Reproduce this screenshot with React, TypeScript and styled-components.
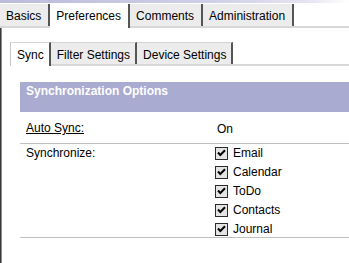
import React from "react";
import styled, { createGlobalStyle } from "styled-components";

const Global = createGlobalStyle`
  html, body { margin: 0; padding: 0; background: #ffffff; }
  body { font-family: "Liberation Sans", Arial, sans-serif; font-size: 12px; color: #000; }
  * { box-sizing: border-box; }
`;

const Page = styled.div`
  width: 349px;
  height: 263px;
  overflow: hidden;
  display: flex;
  flex-direction: column;
`;

const TopStrip = styled.div`
  height: 3px;
  background: linear-gradient(90deg, #bcbcda 0%, #cfcfe6 60%, #e4e4f2 88%, #ffffff 100%);
`;

const TabBar = styled.div`
  display: flex;
  align-items: flex-end;
  margin-top: 1px;
  height: 24px;
  border-bottom: 2px solid #d8d8d8;
`;

const Tab = styled.div<{ $active?: boolean }>`
  height: ${(p) => (p.$active ? 24 : 22)}px;
  margin-bottom: ${(p) => (p.$active ? -2 : 0)}px;
  padding: 3px 7px 0 6px;
  line-height: 19px;
  white-space: nowrap;
  background: ${(p) => (p.$active ? "#ffffff" : "#ececec")};
  border-right: 2px solid #555555;
`;

const Panel = styled.div`
  flex: 1;
  border-left: 1px solid #3a3a3a;
  box-shadow: inset 1px 0 0 #8a8a8a;
  padding-top: 14px;
  display: flex;
  flex-direction: column;
`;

const SubTabBar = styled.div`
  display: flex;
  align-items: flex-end;
  margin-left: 9px;
  height: 24px;
  border-bottom: 2px solid #d8d8d8;
`;

const SubTab = styled.div<{ $active?: boolean; $first?: boolean }>`
  height: ${(p) => (p.$active ? 24 : 22)}px;
  margin-bottom: ${(p) => (p.$active ? -2 : 0)}px;
  padding: 5px 5px 0 6px;
  line-height: 15px;
  white-space: nowrap;
  background: ${(p) => (p.$active ? "#ffffff" : "#ececec")};
  border-top: 1px solid #d4d4d4;
  border-left: ${(p) => (p.$first ? "1px solid #c8c8c8" : "none")};
  border-right: 2px solid #555555;
`;

const Section = styled.div`
  margin-top: 16px;
  margin-left: 19px;
  display: flex;
  flex-direction: column;
`;

const Header = styled.div`
  height: 30px;
  background: #a9abd0;
  color: #ffffff;
  font-weight: bold;
  padding: 2px 6px 0 6px;
  line-height: 14px;
`;

const Row = styled.div<{ $pt: number; $pb: number }>`
  display: grid;
  grid-template-columns: 190px 1fr;
  padding: ${(p) => p.$pt}px 0 ${(p) => p.$pb}px 6px;
  border-bottom: 1px solid #c0c0c0;
  line-height: 14px;
`;

const Label = styled.span<{ $underline?: boolean }>`
  text-decoration: ${(p) => (p.$underline ? "underline" : "none")};
  line-height: 13px;
`;

const Value = styled.span`
  padding-left: 1px;
`;

const CheckList = styled.div`
  display: flex;
  flex-direction: column;
  gap: 6px;
  margin-left: -1px;
`;

const CheckItem = styled.label`
  display: flex;
  align-items: center;
  gap: 5px;
  height: 13px;
  line-height: 13px;
`;

const Box = styled.span`
  width: 13px;
  height: 13px;
  border: 1px solid #2a2a2a;
  background: #e4e4e4;
  display: inline-flex;
  align-items: center;
  justify-content: center;
`;

const Check = () => (
  <Box>
    <svg width="11" height="11" viewBox="0 0 11 11">
      <path d="M2 4.5 L4.3 7 L9 2.2" fill="none" stroke="#000" strokeWidth="2" />
    </svg>
  </Box>
);

const items = ["Email", "Calendar", "ToDo", "Contacts", "Journal"];

export default function App() {
  return (
    <Page>
      <Global />
      <TopStrip />
      <TabBar>
        <Tab>Basics</Tab>
        <Tab $active>Preferences</Tab>
        <Tab>Comments</Tab>
        <Tab>Administration</Tab>
      </TabBar>
      <Panel>
        <SubTabBar>
          <SubTab $active $first>Sync</SubTab>
          <SubTab>Filter Settings</SubTab>
          <SubTab>Device Settings</SubTab>
        </SubTabBar>
        <Section>
          <Header>Synchronization Options</Header>
          <Row $pt={10} $pb={7}>
            <Label $underline>Auto Sync:</Label>
            <Value>On</Value>
          </Row>
          <Row $pt={3} $pb={1}>
            <Label>Synchronize:</Label>
            <CheckList>
              {items.map((it) => (
                <CheckItem key={it}>
                  <Check />
                  <span>{it}</span>
                </CheckItem>
              ))}
            </CheckList>
          </Row>
        </Section>
      </Panel>
    </Page>
  );
}
